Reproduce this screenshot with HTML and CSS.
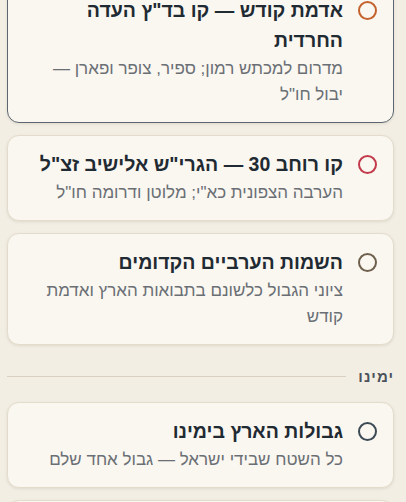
FILE: index.html
```html
<!DOCTYPE html>
<html lang="he" dir="rtl">
<head>
    <meta charset="UTF-8">
    <meta name="viewport" content="width=device-width, initial-scale=1.0">
    <title>גבולות הארץ</title>
    <link rel="stylesheet" href="styles.css">
</head>
<body>
    <div class="options">
        <div class="option selected">
            <span class="radio radio-orange"></span>
            <div class="option-text">
                <div class="option-title">אדמת קודש — קו בד"ץ העדה החרדית</div>
                <div class="option-desc">מדרום למכתש רמון; ספיר, צופר ופארן — יבול חו"ל</div>
            </div>
        </div>
        <div class="option">
            <span class="radio radio-red"></span>
            <div class="option-text">
                <div class="option-title">קו רוחב 30 — הגרי"ש אלישיב זצ"ל</div>
                <div class="option-desc">הערבה הצפונית כא"י; מלוטן ודרומה חו"ל</div>
            </div>
        </div>
        <div class="option">
            <span class="radio radio-brown"></span>
            <div class="option-text">
                <div class="option-title">השמות הערביים הקדומים</div>
                <div class="option-desc">ציוני הגבול כלשונם בתבואות הארץ ואדמת קודש</div>
            </div>
        </div>

        <div class="section-label">
            <span>ימינו</span>
            <div class="section-line"></div>
        </div>

        <div class="option">
            <span class="radio radio-slate"></span>
            <div class="option-text">
                <div class="option-title">גבולות הארץ בימינו</div>
                <div class="option-desc">כל השטח שבידי ישראל — גבול אחד שלם</div>
            </div>
        </div>
        <div class="option">
            <span class="radio radio-slate"></span>
            <div class="option-text">
                <div class="option-title">&nbsp;</div>
            </div>
        </div>
    </div>
</body>
</html>
```

FILE: styles.css
```css
* {
    margin: 0;
    padding: 0;
    box-sizing: border-box;
}

body {
    background: #f2eee4;
    font-family: 'Liberation Sans', Arial, sans-serif;
    color: #1f2a33;
}

.options {
    display: flex;
    flex-direction: column;
    gap: 12px;
    padding: 0 12px 0 7px;
    margin-top: -19px;
}

.option {
    display: flex;
    align-items: flex-start;
    gap: 15px;
    background: #faf7f0;
    border: 1px solid #e4dccb;
    border-radius: 12px;
    padding: 13px 16px 14px 24px;
    box-shadow: 0 1px 3px rgba(90, 75, 40, 0.12);
}

.option.selected {
    border-color: #5c6670;
}

.radio {
    flex: none;
    width: 19px;
    height: 19px;
    margin-top: 6px;
    border-radius: 50%;
    border: 2px solid #3c4a56;
}

.radio-orange { border-color: #c4622d; }
.radio-red { border-color: #c23a4b; }
.radio-brown { border-color: #6e604c; }
.radio-slate { border-color: #3c4a56; }

.option-text {
    display: flex;
    flex-direction: column;
    gap: 1px;
}

.option-title {
    font-size: 19.5px;
    font-weight: bold;
    line-height: 30px;
    color: #1f2a33;
}

.option-desc {
    font-size: 17px;
    line-height: 26px;
    color: #6a6f75;
}

.section-label {
    display: flex;
    align-items: center;
    gap: 12px;
    margin: 11px 0 5px;
    font-size: 15px;
    font-weight: bold;
    color: #4b525a;
    letter-spacing: 1px;
}

.section-line {
    flex: 1;
    height: 1px;
    background: #d9d0bf;
}
```
